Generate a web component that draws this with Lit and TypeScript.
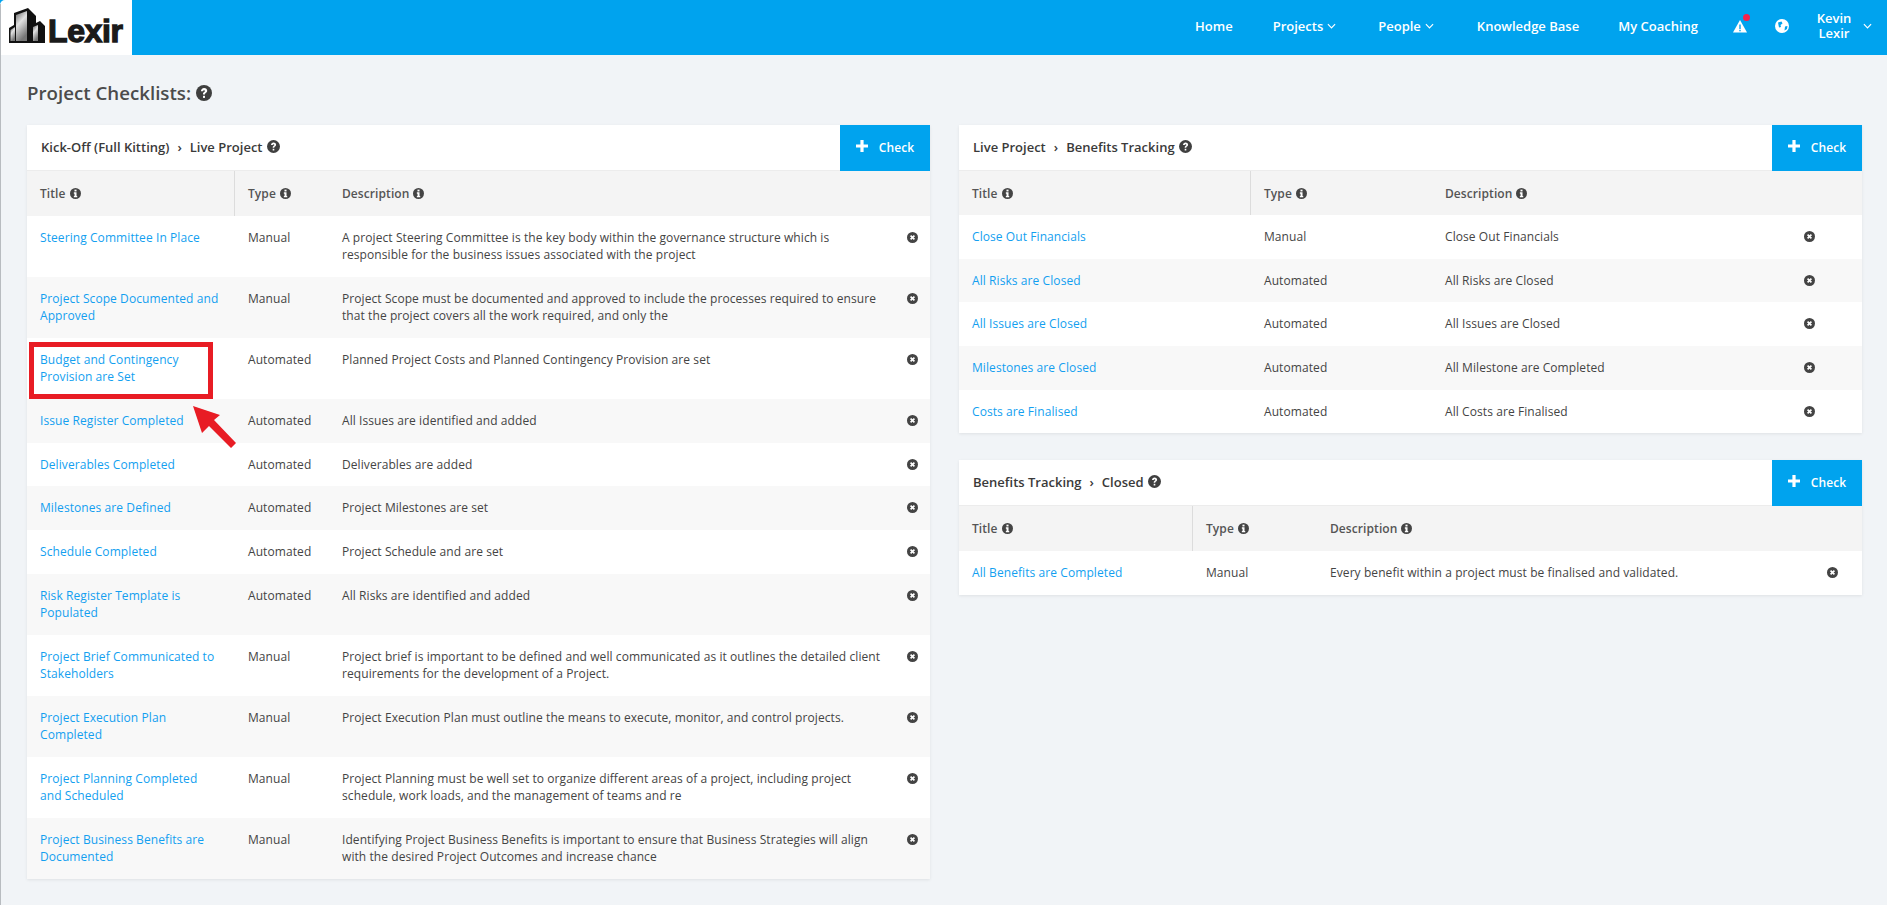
import { LitElement, html, css, svg } from "lit";
import { customElement } from "lit/decorators.js";

type Row = [string, string, string];

const kick: Row[] = [
  ["Steering Committee In Place", "Manual", "A project Steering Committee is the key body within the governance structure which is responsible for the business issues associated with the project"],
  ["Project Scope Documented and Approved", "Manual", "Project Scope must be documented and approved to include the processes required to ensure that the project covers all the work required, and only the"],
  ["Budget and Contingency Provision are Set", "Automated", "Planned Project Costs and Planned Contingency Provision are set"],
  ["Issue Register Completed", "Automated", "All Issues are identified and added"],
  ["Deliverables Completed", "Automated", "Deliverables are added"],
  ["Milestones are Defined", "Automated", "Project Milestones are set"],
  ["Schedule Completed", "Automated", "Project Schedule and are set"],
  ["Risk Register Template is Populated", "Automated", "All Risks are identified and added"],
  ["Project Brief Communicated to Stakeholders", "Manual", "Project brief is important to be defined and well communicated as it outlines the detailed client requirements for the development of a Project."],
  ["Project Execution Plan Completed", "Manual", "Project Execution Plan must outline the means to execute, monitor, and control projects."],
  ["Project Planning Completed and Scheduled", "Manual", "Project Planning must be well set to organize different areas of a project, including project schedule, work loads, and the management of teams and re"],
  ["Project Business Benefits are Documented", "Manual", "Identifying Project Business Benefits is important to ensure that Business Strategies will align with the desired Project Outcomes and increase chance"],
];
const live: Row[] = [
  ["Close Out Financials", "Manual", "Close Out Financials"],
  ["All Risks are Closed", "Automated", "All Risks are Closed"],
  ["All Issues are Closed", "Automated", "All Issues are Closed"],
  ["Milestones are Closed", "Automated", "All Milestone are Completed"],
  ["Costs are Finalised", "Automated", "All Costs are Finalised"],
];
const ben: Row[] = [["All Benefits are Completed", "Manual", "Every benefit within a project must be finalised and validated."]];

const help = (c = "ic") => html`<svg class=${c} viewBox="0 0 16 16"><circle cx="8" cy="8" r="8" fill="currentColor"/><path d="M4.900 6.200C5 4.300 6.300 3 8.100 3c1.900 0 3.100 1.200 3.100 2.700 0 1.100-.6 1.700-1.400 2.200-.6.400-.8.700-.8 1.300v.3H7V9c0-1 .4-1.500 1.100-2 .6-.4.9-.6.9-1 0-.5-.4-.8-.9-.8-.6 0-1 .4-1 1z" fill="#fff"/><rect x="7" y="10.800" width="2" height="2.100" fill="#fff"/></svg>`;
const info = () => html`<svg class="ii" viewBox="0 0 16 16"><circle cx="8" cy="8" r="8" fill="currentColor"/><rect x="6.500" y="2.400" width="3" height="2.600" fill="#fff"/><path d="M5.600 6.200h3.900v5.400h1v2H5.600v-2h1V8.200h-1z" fill="#fff"/></svg>`;
const close = () => html`<svg class="x" viewBox="0 0 16 16"><circle cx="8" cy="8" r="8" fill="currentColor"/><path d="M5.200 5.200l5.600 5.600M10.800 5.200l-5.600 5.600" stroke="#fff" stroke-width="2.400"/></svg>`;
const chev = () => html`<svg class="chev" viewBox="0 0 10 6"><path d="M1 1l4 4 4-4" fill="none" stroke="#fff" stroke-width="1.300"/></svg>`;

const logo = svg`
  <defs>
    <linearGradient id="g1" x1="0" y1="0" x2="0.400" y2="1"><stop offset="0" stop-color="#666"/><stop offset="0.45" stop-color="#e2e2e2"/><stop offset="1" stop-color="#777"/></linearGradient>
  </defs>
  <path d="M9 43 L9 28 L14 25 L14 13 L28 8 L36 16 L36 23 L40 21 L45 26 L45 43 Z" fill="#111"/>
  <path d="M16 41 L16 15 L27 11 L27 41 Z" fill="url(#g1)"/>
  <path d="M10.500 41 L10.500 30 L15 27 L15 41 Z" fill="url(#g1)"/>
  <path d="M33 41 L33 27 L38 25 L38 41 Z" fill="url(#g1)"/>
`;

@customElement("card-table")
class CardTable extends LitElement {
  static properties = {
    a: {}, b: {}, rows: { attribute: false }, cols: {}, th: {},
  };
  a = ""; b = ""; rows: Row[] = []; cols = ""; th = "44px";
  static styles = css`
    :host { display: block; background: #fff; box-shadow: 0 1px 3px rgba(0,0,0,.08); }
    .head { display: flex; align-items: stretch; justify-content: space-between; height: 46px; border-bottom: 1px solid #ececec; box-sizing: border-box; }
    .crumb { padding: 0 0 2px 14px; font-size: 13px; font-weight: 600; color: #3a3a3a; display: flex; align-items: center; }
    .sep { margin: 0 8px; font-weight: 600; }
    .ic { width: 13px; height: 13px; margin-left: 4px; color: #3f3f3f; }
    .btn { width: 90px; height: 46px; background: #00a3ee; color: #fff; font-size: 12px; font-weight: 600; letter-spacing: .08px; display: flex; align-items: center; justify-content: center; gap: 11px; }
    .btn span { display: block; margin-top: -1px; }
    .btn svg { width: 12px; height: 12px; margin-top: -4px; }
    .tr { display: grid; grid-template-columns: var(--c); }
    .thead { background: #f4f4f4; height: var(--h); font-weight: 600; color: #555; align-items: center; font-size: 12px; letter-spacing: .08px; }
    .thead > div { height: 100%; display: flex; align-items: center; padding-left: 13px; box-sizing: border-box; }
    .thead > div:first-child { border-right: 1px solid #dcdcdc; }
    .ii { width: 11px; height: 11px; margin-left: 4px; color: #444; }
    .row { font-size: 12px; letter-spacing: .08px; line-height: 17.300px; color: #444; padding: 13px 0 13.400px; }
    .row:nth-child(even) { background: #f8f8f8; }
    .row > div { padding-left: 13px; box-sizing: border-box; }
    .row a { color: #139ff0; text-decoration: none; display: block; }
    .row .t { padding-right: 13px; }
    .row .d { padding-right: 6px; }
    .x { width: 11px; height: 11px; color: #444; display: block; margin: 3px 0 0 0; }
  `;
  render() {
    return html`
      <div class="head">
        <div class="crumb">${this.a}<span class="sep">›</span>${this.b}${help()}</div>
        <div class="btn"><svg viewBox="0 0 12 12"><path d="M4.400 0h3.200v4.400H12v3.200H7.600V12H4.400V7.600H0V4.400h4.400z" fill="#fff"/></svg><span>Check</span></div>
      </div>
      <div style="--c:${this.cols};--h:${this.th}">
        <div class="tr thead"><div>Title${info()}</div><div>Type${info()}</div><div>Description${info()}</div><div></div></div>
        <div>
          ${this.rows.map(r => html`<div class="tr row"><div class="t"><a>${r[0]}</a></div><div>${r[1]}</div><div class="d">${r[2]}</div><div>${close()}</div></div>`)}
        </div>
      </div>`;
  }
}

@customElement("app-root")
class AppRoot extends LitElement {
  static styles = css`
    :host { display: block; min-height: 905px; background: #f1f4f7; font-family: "Open Sans", sans-serif; position: relative; }
    .nav { height: 55px; background: #00a3ee; display: flex; align-items: center; color: #fff; font-size: 13px; font-weight: 600; }
    .brand { width: 132px; height: 55px; background: #fff; display: flex; align-items: flex-start; box-sizing: border-box; border-top-left-radius: 5px; }
    .brand svg { width: 48px; height: 48px; flex: none; }
    .brand span { font-family: "Liberation Sans", sans-serif; font-weight: 700; font-size: 32px; line-height: 38px; color: #1a1a1a; letter-spacing: -.4px; margin-top: 12px; -webkit-text-stroke: 1.300px #1a1a1a; }
    .links { margin-left: auto; display: flex; align-items: center; padding-bottom: 3px; }
    .links > span { display: flex; align-items: center; gap: 4px; }
    .l1 { margin-right: 40px; }
    .l2 { margin-right: 43px; }
    .l3 { margin-right: 42px; }
    .l4 { margin-right: 39px; }
    .l5 { margin-right: 35px; }
    .chev { width: 9px; height: 6px; }
    .bell { width: 14px; height: 14px; position: relative; margin-right: 28px; }
    .bell svg, .globe svg { display: block; width: 14px; height: 14px; }
    .dot { position: absolute; width: 7px; height: 7px; border-radius: 50%; background: #f5224d; right: -3px; top: -5px; }
    .globe { margin-right: 22px; }
    .user { width: 46px; text-align: center; line-height: 15px; margin-right: 6px; }
    .tail { width: 15px; }
    .main { padding: 0 25px 0 27px; }
    h1 { font-size: 18.700px; font-weight: 600; color: #4b4b4b; margin: 0; padding: 16px 0 10px; height: 44px; display: flex; align-items: center; line-height: 24px; box-sizing: content-box; }
    h1 svg { width: 16px; height: 16px; margin-left: 5px; color: #3f3f3f; }
    .cols { display: grid; grid-template-columns: 903px 903px; column-gap: 29px; }
    .stack { display: flex; flex-direction: column; gap: 27px; }
    .box { position: absolute; left: 29px; top: 342px; width: 184px; height: 57px; border: 5px solid #e81c24; box-sizing: border-box; }
    .arrow { position: absolute; left: 192px; top: 405px; width: 46px; height: 46px; }
    .edge { position: absolute; left: 0; top: 4px; bottom: 0; width: 1px; background: #b8bcc0; z-index: 2; }
  `;
  render() {
    return html`
      <div class="edge"></div>
      <div class="nav">
        <div class="brand"><svg viewBox="0 0 48 48">${logo}</svg><span>Lexir</span></div>
        <div class="links">
          <span class="l1">Home</span>
          <span class="l3">Projects ${chev()}</span>
          <span class="l2">People ${chev()}</span>
          <span class="l4">Knowledge Base</span>
          <span class="l5">My Coaching</span>
          <div class="bell"><svg viewBox="0 0 14 14"><path d="M7 1L14 13.500H0z" fill="#fff"/><rect x="6.300" y="5.500" width="1.400" height="4.500" fill="#00a3ee"/><rect x="6.300" y="10.800" width="1.400" height="1.500" fill="#00a3ee"/></svg><i class="dot"></i></div>
          <div class="globe"><svg viewBox="0 0 14 14"><circle cx="7" cy="7" r="7" fill="#fff"/><path d="M3 3.500l3.500-1 1 2-2 1.500.5 2-2 .5zM10 7.500l2.500-.5-.5 3-2.500 1.500z" fill="#00a3ee"/></svg></div>
          <div class="user">Kevin<br>Lexir</div>
          ${chev()}<span class="tail"></span>
        </div>
      </div>
      <div class="main">
        <h1>Project Checklists: ${help("")}</h1>
        <div class="cols">
          <card-table a="Kick-Off (Full Kitting)" b="Live Project" th="45px" cols="208px 94px 1fr 36px" .rows=${kick}></card-table>
          <div class="stack">
            <card-table a="Live Project" b="Benefits Tracking" th="44px" cols="292px 181px 1fr 71px" .rows=${live}></card-table>
            <card-table a="Benefits Tracking" b="Closed" th="45px" cols="234px 124px 1fr 48px" .rows=${ben}></card-table>
          </div>
        </div>
      </div>
      <div class="box"></div>
      <svg class="arrow" viewBox="0 0 46 46"><path d="M1 1 L28 10 L22 15 L44 38 L39 43 L17 21 L10 28 Z" fill="#e81c24"/></svg>`;
  }
}
